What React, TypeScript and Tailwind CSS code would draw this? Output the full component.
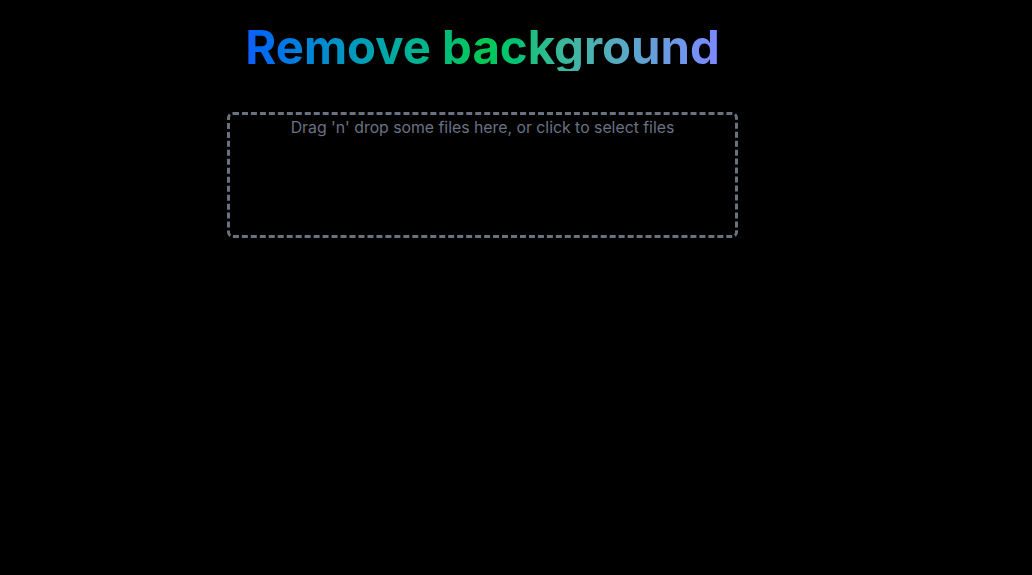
export default function App() {
  return (
    <div className="min-h-screen bg-black" style={{ fontFamily: 'Inter, "Noto Sans", sans-serif' }}>
      <div className="ml-[227px] flex w-[511px] flex-col items-center pt-[23px]">
        <h1 className="bg-gradient-to-r from-blue-600 via-green-500 to-indigo-400 bg-clip-text text-[47.3px] leading-[48px] font-bold text-transparent">
          Remove background
        </h1>
        <div className="mt-[41px] h-[126px] w-full cursor-pointer rounded-md border-[3px] border-dashed border-gray-500 pt-[1px] text-center">
          <p className="text-[15.8px] leading-6 text-gray-500">Drag 'n' drop some files here, or click to select files</p>
        </div>
      </div>
    </div>
  )
}
